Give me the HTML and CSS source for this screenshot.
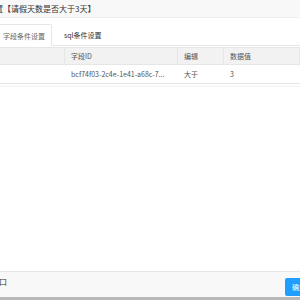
FILE: index.html
```html
<!DOCTYPE html>
<html lang="zh-CN">
<head>
    <meta charset="UTF-8">
    <meta name="viewport" content="width=device-width, initial-scale=1.0">
    <title>条件设置</title>
    <link rel="stylesheet" href="styles.css">
</head>
<body>
    <div class="page">
        <div class="title-bar"><span class="title">置【请假天数是否大于3天】</span></div>
        <div class="tabs">
            <div class="tab active">字段条件设置</div>
            <div class="tab">sql条件设置</div>
        </div>
        <div class="grid">
            <div class="grid-row grid-head">
                <div class="cell"></div>
                <div class="cell">字段ID</div>
                <div class="cell">编辑</div>
                <div class="cell">数据值</div>
            </div>
            <div class="grid-row">
                <div class="cell"></div>
                <div class="cell">bcf74f03-2c4e-1e41-a68c-7...</div>
                <div class="cell">大于</div>
                <div class="cell">3</div>
            </div>
        </div>
        <div class="grid-end"></div>
        <div class="footer">
            <span class="footer-text">口</span>
            <button class="button">确定</button>
        </div>
        <div class="bottom-edge"></div>
    </div>
</body>
</html>
```

FILE: styles.css
```css
html, body {
    margin: 0;
    padding: 0;
    background: #fff;
    overflow: hidden;
}
body {
    font-family: "Noto Sans CJK SC", "Liberation Sans", sans-serif;
    color: #333;
}
.page {
    height: 300px;
    display: flex;
    flex-direction: column;
}
.title-bar {
    height: 17px;
    line-height: 17px;
    background: #f8f8f8;
    border-bottom: 1px solid #eee;
    font-size: 8px;
    white-space: nowrap;
    overflow: hidden;
}
.title {
    margin-left: -5px;
}
.tabs {
    height: 27px;
    display: flex;
    align-items: flex-end;
    border-bottom: 1px solid #e6e6e6;
}
.tab {
    height: 22px;
    line-height: 22px;
    font-size: 7px;
    padding: 0 12px;
    color: #333;
    margin-bottom: -1px;
}
.tab.active {
    width: 53px;
    box-sizing: border-box;
    padding: 0 0 0 3px;
    margin-left: -1px;
    border: 1px solid #e6e6e6;
    border-bottom-color: #fff;
    border-radius: 0 2px 0 0;
    background: #fff;
    color: #666;
}
.grid {
    margin-top: 1px;
}
.grid-row {
    display: grid;
    grid-template-columns: 65px 113px 46px 1fr;
    height: 18px;
    border-bottom: 1px solid #e6e6e6;
    font-size: 7px;
    line-height: 18px;
    color: #555;
}
.grid-head {
    height: 16px;
    line-height: 16px;
    background: #f2f2f2;
    border-top: 1px solid #e6e6e6;
}
.cell {
    padding-left: 6px;
    border-right: 1px solid #e6e6e6;
    white-space: nowrap;
    overflow: hidden;
}
.grid-row .cell:first-child {
    padding-left: 0;
}
.grid-row:not(.grid-head) .cell {
    border-right: none;
}
.grid-end {
    height: 2px;
    border-bottom: 1px solid #f2f2f2;
}
.footer {
    margin-top: auto;
    height: 25px;
    display: flex;
    align-items: flex-start;
    justify-content: space-between;
    background: #f8f8f8;
    border-top: 1px solid #e6e6e6;
    overflow: hidden;
}
.footer-text {
    font-size: 8px;
    line-height: 10px;
    margin-top: 5px;
    color: #333;
    margin-left: -1px;
}
.button {
    height: 18px;
    width: 30px;
    margin-top: 6px;
    margin-right: -15px;
    padding: 0 0 0 7px;
    background: #1e9fff;
    color: #fff;
    border: none;
    border-radius: 2px;
    font-size: 7px;
    text-align: left;
    font-family: "Noto Sans CJK SC", sans-serif;
}
.bottom-edge {
    height: 3px;
    background: #b8b8b8;
}
```
